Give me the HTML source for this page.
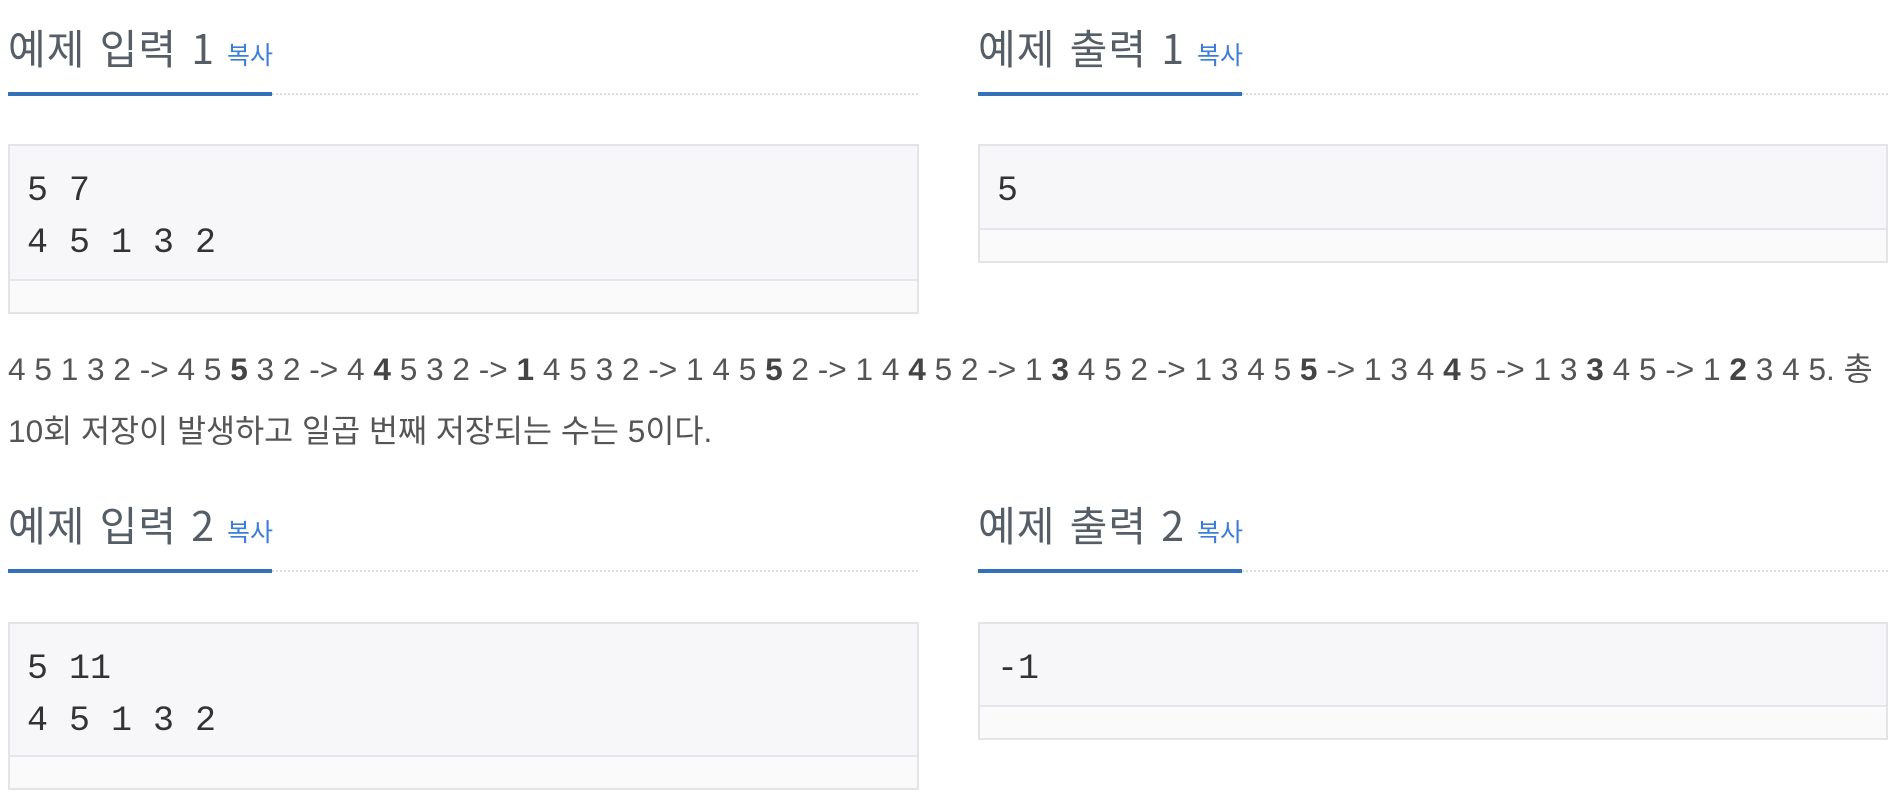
<!DOCTYPE html>
<html><head><meta charset="utf-8"><style>
body{margin:0;width:1890px;height:800px;background:#fff;position:relative;overflow:hidden;font-family:"Liberation Sans","Noto Sans CJK KR",sans-serif;}
.h{position:absolute;font-size:41px;color:#555d66;white-space:nowrap;line-height:1;font-family:"Noto Sans CJK KR",sans-serif;letter-spacing:1px;word-spacing:4px}
.h small{font-size:25px;color:#3b7dd8;margin-left:12px;letter-spacing:0}
.ul{position:absolute;height:0;border-top:2px dotted #dcdce0}
.bl{position:absolute;height:4px;background:#3471b8}
.box{position:absolute;border:2px solid #e3e3e8;background:#f7f7f9;box-sizing:border-box}
.box pre{margin:0;font-family:"Liberation Mono","DejaVu Sans Mono",monospace;font-size:35px;line-height:52px;color:#333;position:absolute;left:17px;top:19px}
.foot{position:absolute;left:0;right:0;bottom:0;background:#fafafa;border-top:2px solid #e6e6ea}
.p{position:absolute;left:8px;top:338px;font-size:31.6px;line-height:62px;color:#555;white-space:nowrap}
.p b{color:#444}
</style></head><body>
<div class="h" style="left:8px;top:26px">예제 입력 1<small>복사</small></div>
<div class="ul" style="left:8px;width:910px;top:93px"></div>
<div class="bl" style="left:8px;width:264px;top:92px"></div>
<div class="box" style="left:8px;width:911px;top:144px;height:170px"><pre>5 7
4 5 1 3 2</pre><div class="foot" style="height:31px"></div></div>

<div class="h" style="left:978px;top:26px">예제 출력 1<small>복사</small></div>
<div class="ul" style="left:978px;width:910px;top:93px"></div>
<div class="bl" style="left:978px;width:264px;top:92px"></div>
<div class="box" style="left:978px;width:910px;top:144px;height:119px"><pre>5</pre><div class="foot" style="height:31px"></div></div>

<div class="p">4 5 1 3 2 -&gt; 4 5 <b>5</b> 3 2 -&gt; 4 <b>4</b> 5 3 2 -&gt; <b>1</b> 4 5 3 2 -&gt; 1 4 5 <b>5</b> 2 -&gt; 1 4 <b>4</b> 5 2 -&gt; 1 <b>3</b> 4 5 2 -&gt; 1 3 4 5 <b>5</b> -&gt; 1 3 4 <b>4</b> 5 -&gt; 1 3 <b>3</b> 4 5 -&gt; 1 <b>2</b> 3 4 5. 총<br>10회 저장이 발생하고 일곱 번째 저장되는 수는 5이다.</div>

<div class="h" style="left:8px;top:503px">예제 입력 2<small>복사</small></div>
<div class="ul" style="left:8px;width:910px;top:570px"></div>
<div class="bl" style="left:8px;width:264px;top:569px"></div>
<div class="box" style="left:8px;width:911px;top:622px;height:168px"><pre>5 11
4 5 1 3 2</pre><div class="foot" style="height:31px"></div></div>

<div class="h" style="left:978px;top:503px">예제 출력 2<small>복사</small></div>
<div class="ul" style="left:978px;width:910px;top:570px"></div>
<div class="bl" style="left:978px;width:264px;top:569px"></div>
<div class="box" style="left:978px;width:910px;top:622px;height:118px"><pre>-1</pre><div class="foot" style="height:31px"></div></div>
</body></html>
